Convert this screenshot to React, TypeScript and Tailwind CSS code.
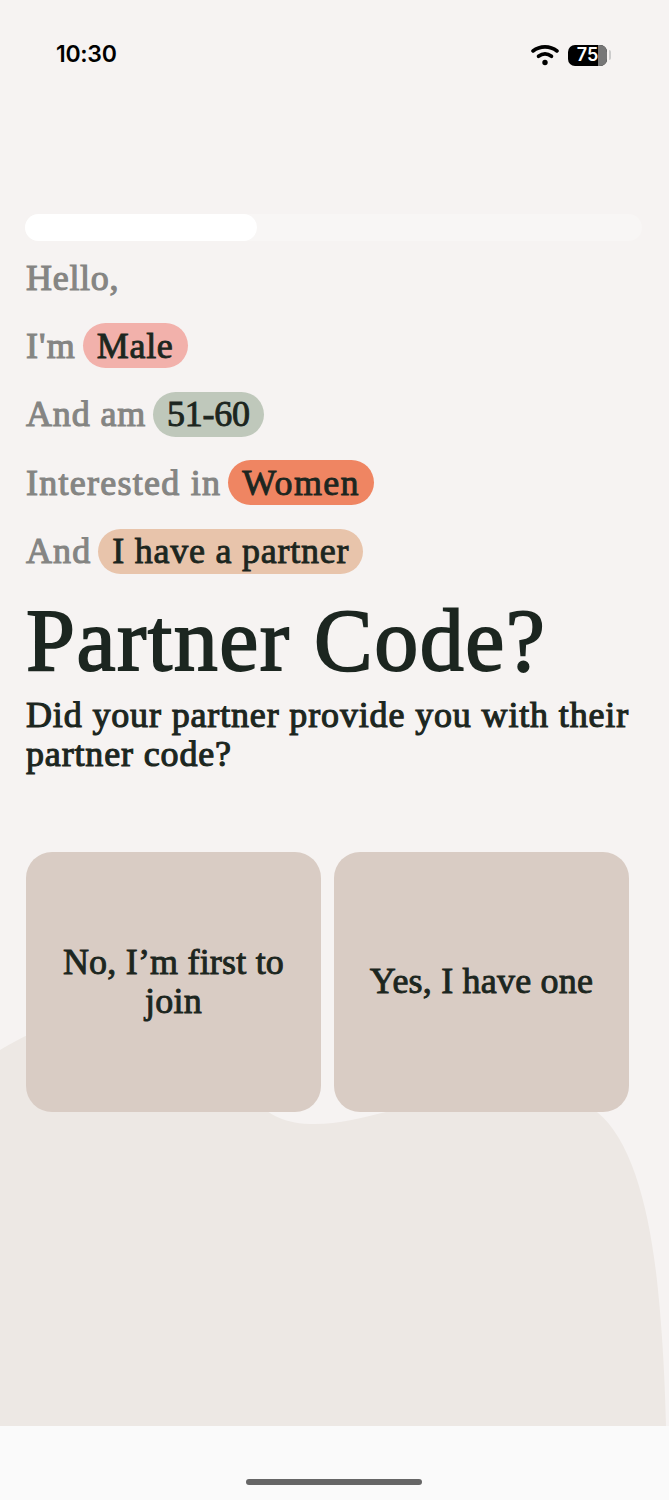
import React from 'react';

const answers = [
  { label: "I'm", labelTrack: 'tracking-[1.1px]', value: 'Male', track: 'tracking-[0.7px]', color: 'bg-[#f2b1ab]' },
  { label: 'And am', labelTrack: 'tracking-[0.85px]', value: '51-60', track: 'tracking-[-0.3px]', color: 'bg-[#bfc8bb]' },
  { label: 'Interested in', labelTrack: 'tracking-[1.25px]', value: 'Women', track: 'tracking-[1.3px]', color: 'bg-[#ef8562]' },
  { label: 'And', labelTrack: 'tracking-[1.1px]', value: 'I have a partner', track: 'tracking-[0.75px]', color: 'bg-[#e8c4ab]' },
];

const serif = "font-['Liberation_Serif',serif]";

const Battery = () => (
  <div className="ml-[9px] flex items-center">
    <div className="relative flex h-[21px] w-[39px] items-center justify-center overflow-hidden rounded-[7px] bg-black">
      <div className="absolute right-0 top-0 h-full w-[9px] bg-[#777]" />
      <span className="relative font-['Inter',sans-serif] text-[18px] font-semibold leading-none text-white">75</span>
    </div>
    <div className="ml-[2px] h-[10px] w-[2px] rounded-r-sm bg-[#ccc]" />
  </div>
);

const Wifi = () => (
  <svg width="28" height="22" viewBox="0 0 28 22" fill="none" stroke="#000" strokeWidth="3.6" strokeLinecap="round">
    <path d="M2 7C9 1.5 19 1.5 26 7" />
    <path d="M7.5 12.3C11.5 9.3 16.5 9.3 20.5 12.3" />
    <circle cx="14" cy="18.5" r="2.7" fill="#000" stroke="none" />
  </svg>
);

const Blob = () => (
  <svg className="absolute left-0 top-[1000px]" width="669" height="426" viewBox="0 0 669 426">
    <path
      d="M0 50C14 42 24 36 40 30L250 96C268 114 282 124 315 124C340 124 360 118 386 112C450 98 540 80 597 112C632 140 650 210 658 290C663 340 665 385 666 426L0 426Z"
      fill="#ede8e4"
    />
  </svg>
);

export default function App() {
  return (
    <div className="relative flex h-[1500px] w-[669px] flex-col overflow-hidden bg-[#f6f3f2] text-[#1c2620]">
      <Blob />
      <div className="relative flex h-[214px] items-start justify-between pl-[56px] pr-[58px] pt-[41px]">
        <span className="font-['Inter',sans-serif] text-[23px] font-semibold leading-[26px] tracking-[-0.3px] text-black">10:30</span>
        <div className="flex items-center pt-[3px]">
          <Wifi />
          <Battery />
        </div>
      </div>

      <div className="relative mx-[25px] h-[27px] w-[617px] rounded-full bg-[#f8f6f5]">
        <div className="h-full w-[232px] rounded-full bg-white" />
      </div>

      <div className={`relative flex flex-1 flex-col px-[26px] ${serif}`}>
        <div className="mt-[14px] flex h-[45px] items-center text-[36px] leading-none tracking-[0.7px] text-[#858583] [-webkit-text-stroke:1.1px_#858583]">
          Hello,
        </div>
        {answers.map((a) => (
          <div key={a.label} className="mt-[23.4px] flex h-[45px] items-center text-[36px] leading-none">
            <span className={`text-[#858583] [-webkit-text-stroke:1.1px_#858583] ${a.labelTrack}`}>{a.label}</span>
            <span className={`ml-[7px] flex h-[45px] items-center rounded-full px-[14px] [-webkit-text-stroke:0.9px_#1c2620] ${a.track} ${a.color}`}>
              {a.value}
            </span>
          </div>
        ))}

        <h1 className="mt-[20px] text-[88px] font-normal leading-[94px] tracking-[1.5px] [-webkit-text-stroke:1.8px_#1c2620]">Partner Code?</h1>
        <p className="mt-[8px] text-[36px] leading-[39px] tracking-[0.85px] [-webkit-text-stroke:1.1px_#1c2620]">
          Did your partner provide you with their partner code?
        </p>

        <div className="mt-[78px] flex gap-[13px] pr-[14px]">
          <button className="flex h-[260px] flex-1 items-center justify-center rounded-[26px] bg-[#d9ccc4] px-[30px] text-center text-[36px] leading-[39px] tracking-[0.2px] [-webkit-text-stroke:0.9px_#1c2620]">
            No, I’m first to join
          </button>
          <button className="flex h-[260px] flex-1 items-center justify-center rounded-[26px] bg-[#d9ccc4] px-[30px] text-center text-[36px] leading-[39px] tracking-[0.2px] [-webkit-text-stroke:0.9px_#1c2620]">
            Yes, I have one
          </button>
        </div>
      </div>

      <div className="relative flex h-[74px] items-end justify-center bg-[#fafafa] pb-[15px] pr-[2px]">
        <div className="h-[6px] w-[176px] rounded-full bg-[#666]" />
      </div>
    </div>
  );
}
